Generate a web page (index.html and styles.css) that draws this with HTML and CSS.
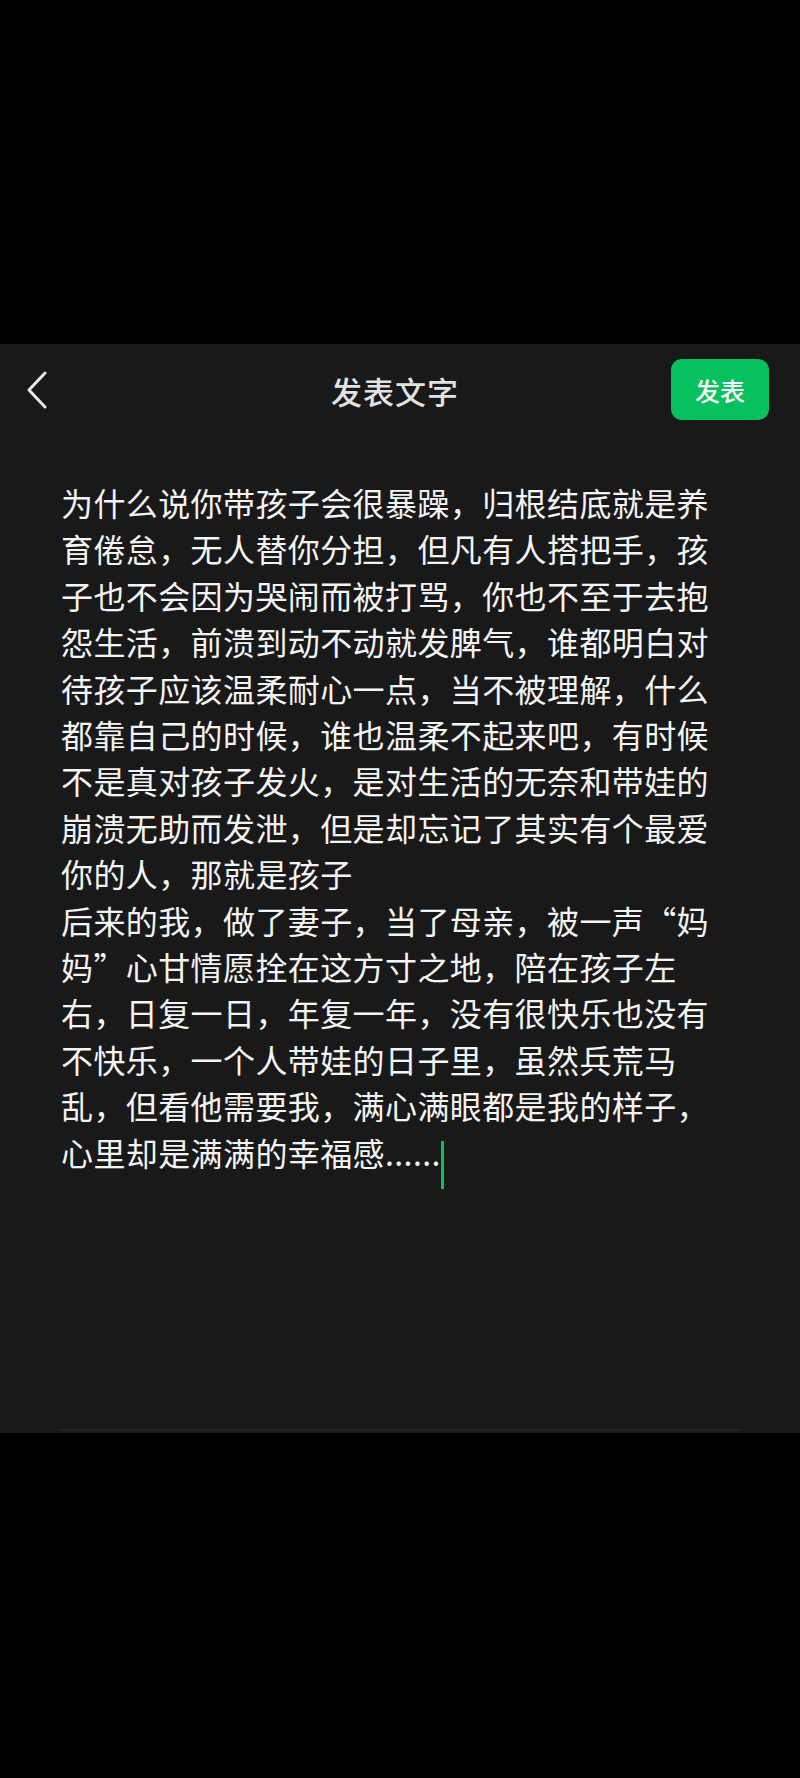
FILE: index.html
```html
<!DOCTYPE html>
<html lang="zh-CN">
<head>
<meta charset="utf-8">
<title>发表文字</title>
<link rel="stylesheet" href="styles.css">
</head>
<body>
<div class="top-space"></div>
<main class="panel">
  <header class="bar">
    <div class="bar-left">
      <svg class="back" width="22" height="38" viewBox="0 0 22 38" aria-hidden="true">
        <polyline points="19,2 3,19 19,36" fill="none" stroke="#e8e8e8" stroke-width="3" stroke-linecap="round" stroke-linejoin="round"/>
      </svg>
    </div>
    <h1 class="title">发表文字</h1>
    <div class="bar-right">
      <button class="publish">发表</button>
    </div>
  </header>
  <section class="editor">
    <p class="para">为什么说你带孩子会很暴躁，归根结底就是养育倦怠，无人替你分担，但凡有人搭把手，孩子也不会因为哭闹而被打骂，你也不至于去抱怨生活，前溃到动不动就发脾气，谁都明白对待孩子应该温柔耐心一点，当不被理解，什么都靠自己的时候，谁也温柔不起来吧，有时候不是真对孩子发火，是对生活的无奈和带娃的崩溃无助而发泄，但是却忘记了其实有个最爱你的人，那就是孩子</p>
    <p class="para">后来的我，做了妻子，当了母亲，被一声<span class="q">“</span>妈妈<span class="q">”</span>心甘情愿拴在这方寸之地，陪在孩子左右，日复一日，年复一年，没有很快乐也没有不快乐，一个人带娃的日子里，虽然兵荒马乱，但看他需要我，满心满眼都是我的样子，心里却是满满的幸福感......<span class="cursor"></span></p>
  </section>
  <div class="rule"></div>
</main>
</body>
</html>
```
FILE: styles.css
```css
html, body {
  margin: 0;
  padding: 0;
  background: #000;
}
body {
  width: 800px;
  height: 1778px;
  font-family: "Noto Sans CJK SC", "Noto Sans", sans-serif;
}
.top-space {
  height: 344px;
}
.panel {
  background: #191919;
  height: 1089px;
  display: flex;
  flex-direction: column;
}
.bar {
  height: 92px;
  display: grid;
  grid-template-columns: 1fr auto 1fr;
  align-items: center;
}
.bar-left {
  padding-left: 26px;
  display: flex;
  align-items: center;
}
.back {
  display: block;
}
.title {
  margin: 0;
  font-size: 31px;
  font-weight: 500;
  color: #e2e2e2;
  letter-spacing: 1px;
  padding-right: 10px;
}
.bar-right {
  display: flex;
  justify-content: flex-end;
  padding-right: 31px;
}
.publish {
  width: 98px;
  height: 61px;
  border: 0;
  border-radius: 11px;
  background: #07c160;
  color: #f4f4f4;
  font-family: "Noto Sans CJK SC", sans-serif;
  font-size: 25px;
  font-weight: 500;
  padding: 0;
  margin-top: -1px;
}
.editor {
  flex: 1;
  padding: 43px 0 0 61px;
  width: 665px;
}
.para {
  margin: 0;
  font-size: 32px;
  letter-spacing: 0.4px;
  line-height: 46.4px;
  color: #f4f4f4;
}
.q {
  font-feature-settings: "fwid";
}
.cursor {
  display: inline-block;
  width: 3px;
  height: 48px;
  background: #07c160;
  vertical-align: -23px;
  margin-left: 0;
}
.rule {
  height: 2px;
  margin: 0 60px 2px 60px;
  background: #242424;
}
```
